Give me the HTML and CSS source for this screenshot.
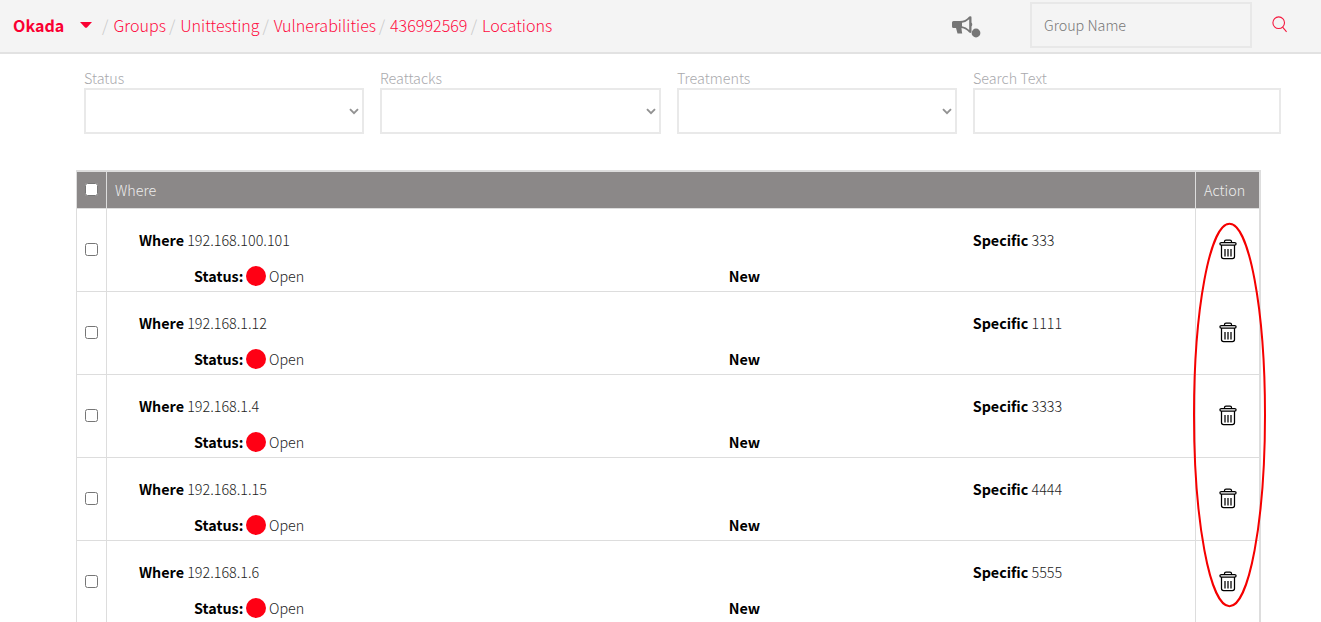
FILE: index.html
```
<!DOCTYPE html>
<html lang="en">
<head>
<meta charset="utf-8">
<title>Locations</title>
<link rel="stylesheet" href="styles.css">
</head>
<body>
<svg class="defs" width="0" height="0">
  <symbol id="trash" viewBox="0 0 18 21">
    <path d="M5.500 3V2.500Q5.500 1 7 1h4Q12.500 1 12.500 2.500V3M2.300 3.500h13.400q1.400 0 1.400 1.300t-1.400 1.300H2.300Q.9 6.100.9 4.800T2.300 3.500zM2.500 6v11.400q0 2.100 2.100 2.100h8.800q2.100 0 2.100-2.100V6M6 10v7.500M9 10v7.500M12 10v7.500" fill="none" stroke="#000" stroke-width="1.250"/>
  </symbol>
</svg>
<header class="topbar">
  <nav class="crumbs">
    <b class="org">Okada</b>
    <svg class="caret" width="12" height="6" viewBox="0 0 12 6"><path d="M0 0h12L7 5.4q-1 .8-2 0z"/></svg>
    <i class="sep s1">/</i><a class="c1">Groups</a>
    <i class="sep s2">/</i><a class="c2">Unittesting</a>
    <i class="sep s3">/</i><a class="c3">Vulnerabilities</a>
    <i class="sep s4">/</i><a class="c4">436992569</a>
    <i class="sep s5">/</i><a class="c5">Locations</a>
  </nav>
  <svg class="horn" width="30" height="23" viewBox="0 0 30 23">
    <path fill-rule="evenodd" d="M2.500 5H9q5.500 0 9.200-4.500Q20.500-.5 20.500 1.500v5q1.500 2 0 4v5q0 2.200-2.300 1-3.200-3.800-7.700-4.500.2 3 .7 5.500H6.500L5 12H2.500Q1 12 1 10.500v-4Q1 5 2.500 5zM11 6.700v3.600q4 .5 7.200 3.700V3.200Q15 6.200 11 6.700z"/>
    <circle cx="25" cy="17" r="4.400"/>
  </svg>
  <div class="groupname">Group Name</div>
  <svg class="lens" width="16" height="17" viewBox="0 0 16 17"><circle cx="6.700" cy="6.700" r="5.800"/><path d="M10.600 11.200l4 4.600"/></svg>
</header>
<section class="filters">
  <div class="field"><label>Status</label><div class="box"><svg class="chev" viewBox="0 0 10 7"><path d="M1 1.200l4 4 4-4"/></svg></div></div>
  <div class="field"><label>Reattacks</label><div class="box"><svg class="chev" viewBox="0 0 10 7"><path d="M1 1.200l4 4 4-4"/></svg></div></div>
  <div class="field"><label>Treatments</label><div class="box"><svg class="chev" viewBox="0 0 10 7"><path d="M1 1.200l4 4 4-4"/></svg></div></div>
  <div class="field"><label>Search Text</label><div class="box"></div></div>
</section>
<main class="table">
  <div class="row head"><div class="check"><input type="checkbox"></div><div class="th">Where</div><div class="th">Action</div></div>
  <div class="row"><div class="check"><input type="checkbox"></div><div class="info"><p class="where"><b>Where</b> 192.168.100.101</p><p class="spec"><b>Specific</b> 333</p><p class="status"><b>Status:</b><span class="dot"></span>Open</p><p class="new"><b>New</b></p></div><div class="act"><svg width="18" height="21"><use href="#trash"/></svg></div></div>
  <div class="row"><div class="check"><input type="checkbox"></div><div class="info"><p class="where"><b>Where</b> 192.168.1.12</p><p class="spec"><b>Specific</b> 1111</p><p class="status"><b>Status:</b><span class="dot"></span>Open</p><p class="new"><b>New</b></p></div><div class="act"><svg width="18" height="21"><use href="#trash"/></svg></div></div>
  <div class="row"><div class="check"><input type="checkbox"></div><div class="info"><p class="where"><b>Where</b> 192.168.1.4</p><p class="spec"><b>Specific</b> 3333</p><p class="status"><b>Status:</b><span class="dot"></span>Open</p><p class="new"><b>New</b></p></div><div class="act"><svg width="18" height="21"><use href="#trash"/></svg></div></div>
  <div class="row"><div class="check"><input type="checkbox"></div><div class="info"><p class="where"><b>Where</b> 192.168.1.15</p><p class="spec"><b>Specific</b> 4444</p><p class="status"><b>Status:</b><span class="dot"></span>Open</p><p class="new"><b>New</b></p></div><div class="act"><svg width="18" height="21"><use href="#trash"/></svg></div></div>
  <div class="row"><div class="check"><input type="checkbox"></div><div class="info"><p class="where"><b>Where</b> 192.168.1.6</p><p class="spec"><b>Specific</b> 5555</p><p class="status"><b>Status:</b><span class="dot"></span>Open</p><p class="new"><b>New</b></p></div><div class="act"><svg width="18" height="21"><use href="#trash"/></svg></div></div>
</main>
<svg class="highlight" width="75" height="386" viewBox="0 0 75 386"><ellipse cx="37.500" cy="193" rx="35.500" ry="191.200"/></svg>
</body>
</html>
```
FILE: styles.css
```
* { box-sizing: border-box; }
body {
  margin: 0;
  height: 622px;
  overflow: hidden;
  position: relative;
  background: #fff;
  color: #222;
  font: 300 14.33px/20px "Noto Sans CJK SC", "Open Sans", sans-serif;
  white-space: nowrap;
}
b { font-weight: 700; color: #000; }
p { margin: 0; }
.defs { position: absolute; }
.topbar {
  height: 54px;
  background: #f4f4f4;
  border-bottom: 2px solid #e2e2e2;
  display: flex;
  align-items: flex-start;
}
.crumbs {
  width: 951px;
  height: 50px;
  padding-left: 13px;
  display: flex;
  align-items: center;
  font-size: 16.1px;
  color: #ff0a40;
}
.crumbs .org { color: #fa0032; width: 67px; }
.caret { fill: #fa0032; width: 12px; margin-right: 10px; }
.crumbs a, .sep { flex: none; }
.sep { font-style: normal; color: #c8c8c8; width: 11.300px; }
.s1 { width: 11.500px; }
.c1 { width: 55.400px; }
.c2 { width: 82.200px; }
.c3 { width: 105px; }
.c4 { width: 80.700px; }
.horn { margin-top: 16px; fill: #767676; }
.groupname {
  margin: 2px 0 0 49px;
  width: 222px;
  height: 46px;
  border: 2px solid #e8e8e8;
  padding: 11px 12px;
  color: #777;
}
.lens { margin: 16px 0 0 20px; fill: none; stroke: #f5183e; stroke-width: 1.1; }
.filters {
  display: grid;
  grid-template-columns: 280px 281px 280px 308px;
  gap: 16px;
  padding: 14px 0 0 84px;
  height: 116px;
}
.field label { display: block; height: 20px; color: #a9a9ad; }
.box {
  height: 46px;
  border: 2px solid #e9e9e9;
  display: flex;
  align-items: center;
  justify-content: flex-end;
  padding-right: 3px;
}
.chev { width: 10px; height: 7px; margin-top: 1px; fill: none; stroke: #929292; stroke-width: 1.9; }
.table {
  margin-left: 76px;
  width: 1185px;
  border: solid #ddd;
  border-width: 2px 2px 0 1px;
}
.row {
  display: grid;
  grid-template-columns: 30px 1088px 64px;
  height: 83px;
  border-bottom: 1px solid #ddd;
}
.row > div + div { border-left: 1px solid #ddd; }
.row > .check { display: flex; align-items: center; justify-content: center; border-right: 1px solid #ddd; padding-bottom: 13px; }
.row > .check + div { border-left: 0; }
.check input { margin: 0; width: 13px; height: 13px; }
.head { height: 37px; background: #8b8888; color: #eee; }
.head > .check { padding-bottom: 2px; }
.th { padding: 8px; }
.info {
  display: grid;
  grid-template-columns: 534.700px 244px 1fr;
  grid-template-rows: 36px 36px;
  padding: 21px 0 0 87px;
}
.where { grid-column: 1 / 3; margin-left: -55px; }
.status { grid-column: 1; grid-row: 2; display: flex; }
.new { grid-column: 2; grid-row: 2; }
.dot { width: 20px; height: 20px; border-radius: 50%; background: #ff0014; margin: 0 3px; }
.status b { width: 49px; }
.act { display: flex; align-items: center; justify-content: center; padding-bottom: 12px; }
.highlight { position: absolute; left: 1192px; top: 222px; fill: none; stroke: #f50000; stroke-width: 2; }
```
